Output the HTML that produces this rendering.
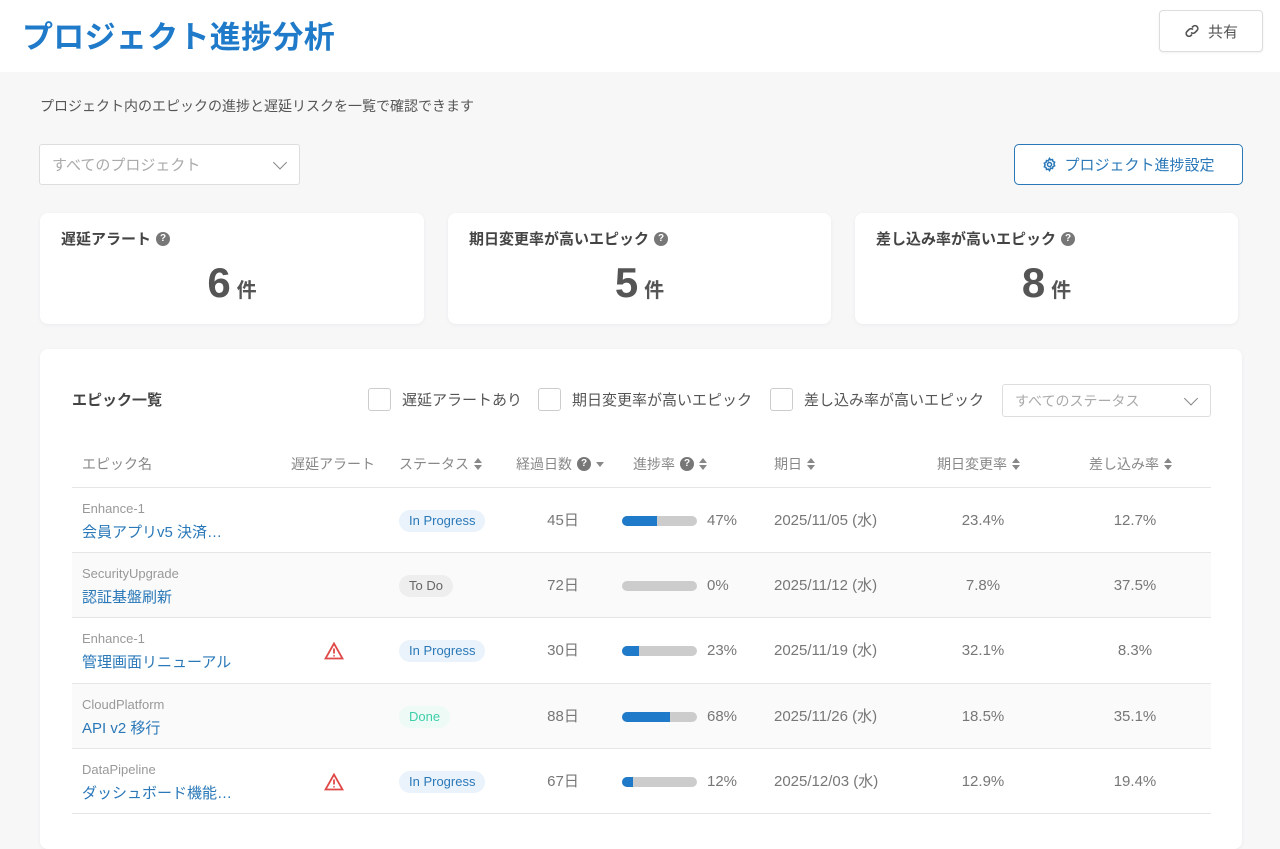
<!DOCTYPE html>
<html><head><meta charset="utf-8"><style>
*{box-sizing:border-box;margin:0;padding:0}
body{width:1280px;height:820px;overflow:hidden;background:#f7f7f8;font-family:"Liberation Sans","Noto Sans CJK JP",sans-serif;color:#555;position:relative}
.abs{position:absolute}
.hdr{left:0;top:0;width:1280px;height:72px;background:#fff}
h1{position:absolute;left:22px;top:12px;font-size:31px;font-weight:700;color:#1f7ac9;letter-spacing:0.3px}
.share{left:1159px;top:10px;width:104px;height:42px;border:1px solid #ddd;border-radius:4px;background:#fff;display:flex;align-items:center;justify-content:center;font-size:15px;color:#555;gap:8px;box-shadow:0 1px 2px rgba(0,0,0,.06)}
.sub{left:40px;top:96px;font-size:14px;color:#555}
.sel{background:#fff;border:1px solid #ddd;border-radius:3px;color:#aaa;font-size:15px;display:flex;align-items:center;padding-left:12px}
.chev{position:absolute;right:14px;top:50%;width:10px;height:10px;border-right:1.5px solid #888;border-bottom:1.5px solid #888;transform:translateY(-75%) rotate(45deg)}
.setbtn{left:1014px;top:144px;width:229px;height:41px;border:1.5px solid #2a78b8;border-radius:5px;background:#fff;color:#2a78b8;font-size:15px;display:flex;align-items:center;justify-content:center;gap:7px}
.card{background:#fff;border-radius:8px;box-shadow:0 1px 4px rgba(0,0,0,.05)}
.st .t{position:absolute;left:21px;top:15px;font-size:15px;font-weight:700;color:#444;display:flex;align-items:center;gap:5px}
.q{display:inline-block;width:14px;height:14px;border-radius:50%;background:#777;color:#fff;font-size:10px;font-weight:700;text-align:center;line-height:14px}
.st .n{position:absolute;left:0;right:0;top:46px;text-align:center;font-size:42px;font-weight:700;color:#555}
.st .n span{font-size:20px;margin-left:6px}
.cb{display:inline-block;width:23px;height:23px;border:1.5px solid #ccc;border-radius:3px;background:#fff;vertical-align:middle}
.flt{position:absolute;top:388px;font-size:15px;color:#555;display:flex;align-items:center;gap:11px}
.th{position:absolute;top:454px;font-size:14px;color:#888;display:flex;align-items:center;gap:5px}
.sort{display:inline-block;width:8px;height:13px;position:relative}
.sort:before{content:"";position:absolute;left:0;top:0;border:4px solid transparent;border-bottom:5px solid #888;border-top:0}
.sort:after{content:"";position:absolute;left:0;top:7px;border:4px solid transparent;border-top:5px solid #888;border-bottom:0}
.row{position:absolute;left:72px;width:1139px;height:65px;border-top:1.5px solid #e5e5e5}
.row.g{background:#fafafa}
.row div{position:absolute}
.k{left:10px;top:13px;font-size:13px;color:#999}
.nm{left:10px;top:33px;font-size:15px;color:#2a78b8}
.pill{left:327px;top:22px;height:22px;padding:0 10px;border-radius:11px;font-size:13px;line-height:22px}
.ip{background:#eaf3fb;color:#2a78b8}
.td{background:#eee;color:#666}
.dn{background:#eefaf6;color:#3dcfa8}
.c{top:23px;height:20px;line-height:20px;font-size:15px;color:#777;text-align:center;white-space:nowrap}
.bar{left:550px;top:28px;width:75px;height:10px;border-radius:5px;background:#ccc;overflow:hidden}
.bar i{display:block;height:100%;background:#1f7ac9}
.warn{left:252px;top:24px}
</style></head><body>
<div class="abs hdr"></div>
<h1>プロジェクト進捗分析</h1>
<div class="abs share"><svg width="16" height="16" viewBox="0 0 16 16" fill="none" stroke="#555" stroke-width="1.6"><path d="M7 9.5a3 3 0 0 0 4 0l2-2a2.8 2.8 0 0 0-4-4l-1 1"/><path d="M9 6.5a3 3 0 0 0-4 0l-2 2a2.8 2.8 0 0 0 4 4l1-1"/></svg>共有</div>
<div class="abs sub">プロジェクト内のエピックの進捗と遅延リスクを一覧で確認できます</div>
<div class="abs sel" style="left:39px;top:144px;width:261px;height:41px">すべてのプロジェクト<span class="chev"></span></div>
<div class="abs setbtn"><svg width="15" height="15" viewBox="0 0 16 16" fill="none" stroke="#2a78b8" stroke-width="1.6"><circle cx="8" cy="8" r="2.2"/><path d="M8 1.5l1.2 1.6 2-.4.5 2 1.8.9-.8 1.9.8 1.9-1.8.9-.5 2-2-.4L8 14.5l-1.2-1.6-2 .4-.5-2-1.8-.9.8-1.9-.8-1.9 1.8-.9.5-2 2 .4z"/></svg>プロジェクト進捗設定</div>

<div class="abs card st" style="left:40px;top:213px;width:384px;height:111px"><div class="t">遅延アラート<span class="q">?</span></div><div class="n">6<span>件</span></div></div>
<div class="abs card st" style="left:448px;top:213px;width:383px;height:111px"><div class="t">期日変更率が高いエピック<span class="q">?</span></div><div class="n">5<span>件</span></div></div>
<div class="abs card st" style="left:855px;top:213px;width:383px;height:111px"><div class="t">差し込み率が高いエピック<span class="q">?</span></div><div class="n">8<span>件</span></div></div>

<div class="abs card" style="left:40px;top:349px;width:1202px;height:500px"></div>
<div class="abs" style="left:72px;top:389px;font-size:15px;font-weight:700;color:#444">エピック一覧</div>
<div class="flt" style="left:368px"><span class="cb"></span>遅延アラートあり</div>
<div class="flt" style="left:538px"><span class="cb"></span>期日変更率が高いエピック</div>
<div class="flt" style="left:770px"><span class="cb"></span>差し込み率が高いエピック</div>
<div class="abs sel" style="left:1002px;top:384px;width:209px;height:33px;font-size:14px">すべてのステータス<span class="chev"></span></div>

<div class="th" style="left:82px">エピック名</div>
<div class="th" style="left:291px">遅延アラート</div>
<div class="th" style="left:399px">ステータス<span class="sort"></span></div>
<div class="th" style="left:516px">経過日数<span class="q">?</span><span style="display:inline-block;border:4px solid transparent;border-top:5px solid #888;margin-top:5px"></span></div>
<div class="th" style="left:633px">進捗率<span class="q">?</span><span class="sort"></span></div>
<div class="th" style="left:774px">期日<span class="sort"></span></div>
<div class="th" style="left:937px">期日変更率 <span class="sort"></span></div>
<div class="th" style="left:1089px">差し込み率 <span class="sort"></span></div>

<div class="row" style="top:487px"><div class="k">Enhance-1</div><div class="nm">会員アプリv5 決済…</div><div class="pill ip">In Progress</div><div class="c" style="left:460px;width:62px">45日</div><div class="bar"><i style="width:47%"></i></div><div class="c" style="left:635px">47%</div><div class="c" style="left:702px">2025/11/05 (水)</div><div class="c" style="left:870px;width:82px">23.4%</div><div class="c" style="left:1022px;width:82px">12.7%</div></div>
<div class="row g" style="top:552px"><div class="k">SecurityUpgrade</div><div class="nm">認証基盤刷新</div><div class="pill td">To Do</div><div class="c" style="left:460px;width:62px">72日</div><div class="bar"><i style="width:0"></i></div><div class="c" style="left:635px">0%</div><div class="c" style="left:702px">2025/11/12 (水)</div><div class="c" style="left:870px;width:82px">7.8%</div><div class="c" style="left:1022px;width:82px">37.5%</div></div>
<div class="row" style="top:617px"><div class="k">Enhance-1</div><div class="nm">管理画面リニューアル</div><div class="warn"><svg width="20" height="18" viewBox="0 0 20 18" fill="none" stroke="#e04848" stroke-width="1.8"><path d="M10 1.5L1.5 16.5h17z"/><path d="M10 6.5v5M10 13.2v1.3"/></svg></div><div class="pill ip">In Progress</div><div class="c" style="left:460px;width:62px">30日</div><div class="bar"><i style="width:23%"></i></div><div class="c" style="left:635px">23%</div><div class="c" style="left:702px">2025/11/19 (水)</div><div class="c" style="left:870px;width:82px">32.1%</div><div class="c" style="left:1022px;width:82px">8.3%</div></div>
<div class="row g" style="top:683px"><div class="k">CloudPlatform</div><div class="nm">API v2 移行</div><div class="pill dn">Done</div><div class="c" style="left:460px;width:62px">88日</div><div class="bar"><i style="width:64%"></i></div><div class="c" style="left:635px">68%</div><div class="c" style="left:702px">2025/11/26 (水)</div><div class="c" style="left:870px;width:82px">18.5%</div><div class="c" style="left:1022px;width:82px">35.1%</div></div>
<div class="row" style="top:748px;height:66px;border-bottom:1.5px solid #e5e5e5"><div class="k">DataPipeline</div><div class="nm">ダッシュボード機能…</div><div class="warn"><svg width="20" height="18" viewBox="0 0 20 18" fill="none" stroke="#e04848" stroke-width="1.8"><path d="M10 1.5L1.5 16.5h17z"/><path d="M10 6.5v5M10 13.2v1.3"/></svg></div><div class="pill ip">In Progress</div><div class="c" style="left:460px;width:62px">67日</div><div class="bar"><i style="width:14%"></i></div><div class="c" style="left:635px">12%</div><div class="c" style="left:702px">2025/12/03 (水)</div><div class="c" style="left:870px;width:82px">12.9%</div><div class="c" style="left:1022px;width:82px">19.4%</div></div>
</body></html>
